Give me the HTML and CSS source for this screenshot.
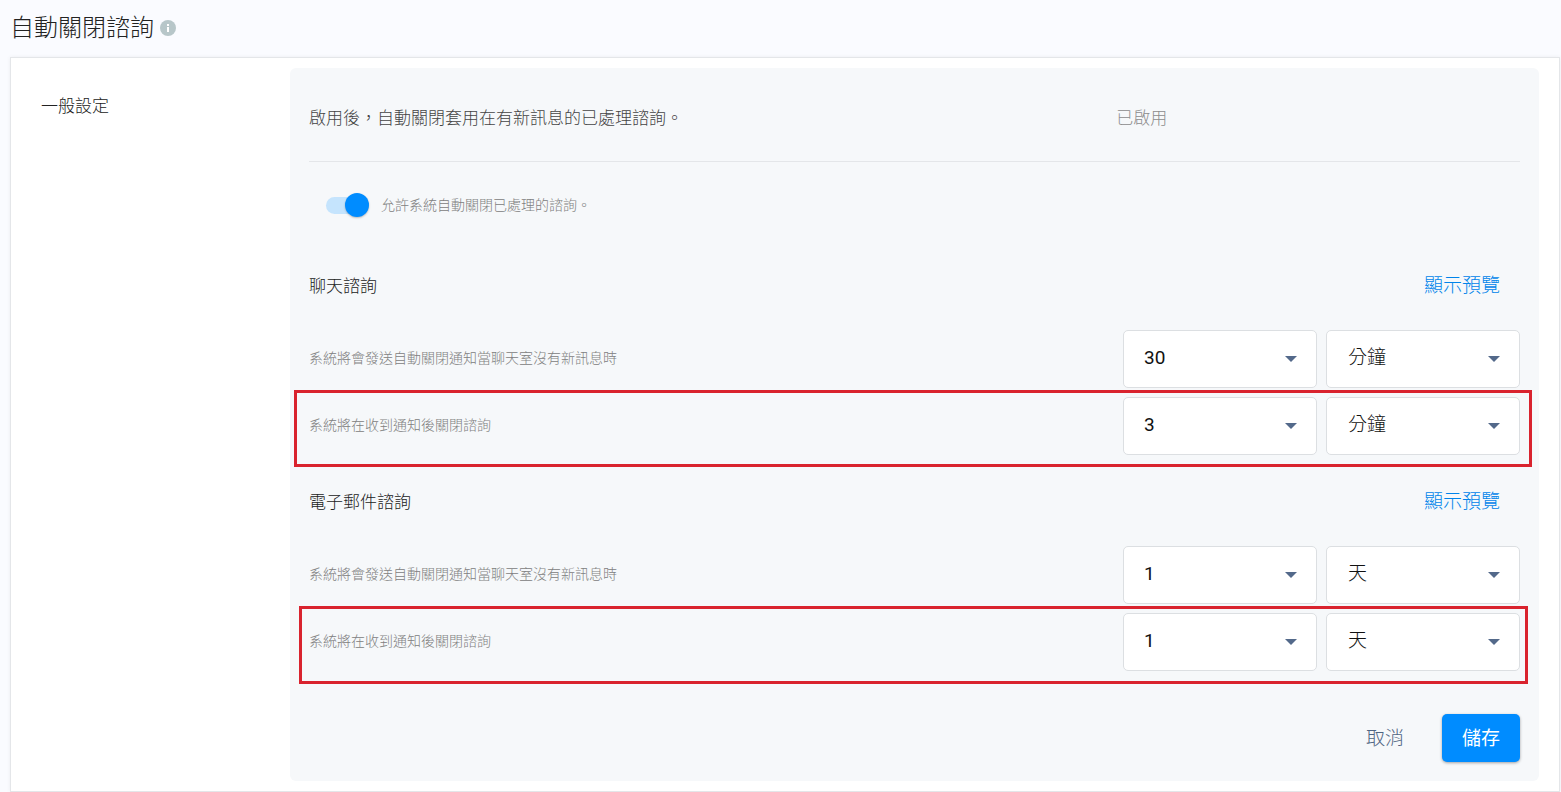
FILE: index.html
```html
<!DOCTYPE html>
<html lang="zh-Hant">
  <head>
    <meta charset="UTF-8" />
    <meta name="viewport" content="width=device-width, initial-scale=1.0" />
    <title>自動關閉諮詢</title>
    <link rel="stylesheet" href="styles.css">
  </head>
  <body>
    <header class="page-header">
      <h1>自動關閉諮詢</h1>
      <svg class="info-icon" viewBox="0 0 16 16" aria-hidden="true">
        <circle cx="8" cy="8" r="8" fill="#b7c6c9" />
        <rect x="7" y="4" width="2" height="2" fill="#fff" />
        <rect x="7" y="7" width="2" height="5" fill="#fff" />
      </svg>
    </header>
    <main class="card">
      <aside class="sidebar">
        <h2>一般設定</h2>
      </aside>
      <form class="panel">
        <div class="status-row">
          <p>啟用後，自動關閉套用在有新訊息的已處理諮詢。</p>
          <p class="status">已啟用</p>
        </div>
        <div class="toggle-row">
          <input type="checkbox" id="autoClose" class="switch" checked />
          <label for="autoClose">允許系統自動關閉已處理的諮詢。</label>
        </div>

        <section class="group">
          <div class="group-header">
            <h3>聊天諮詢</h3>
            <a href="#">顯示預覽</a>
          </div>
          <div class="row">
            <label for="chatNotify">系統將會發送自動關閉通知當聊天室沒有新訊息時</label>
            <div class="select">
              <select id="chatNotify" class="number">
                <option>3</option>
                <option selected>30</option>
              </select>
            </div>
            <div class="select">
              <select aria-label="單位">
                <option selected>分鐘</option>
                <option>天</option>
              </select>
            </div>
          </div>
          <div class="row marked">
            <label for="chatClose">系統將在收到通知後關閉諮詢</label>
            <div class="select">
              <select id="chatClose" class="number">
                <option selected>3</option>
                <option>30</option>
              </select>
            </div>
            <div class="select">
              <select aria-label="單位">
                <option selected>分鐘</option>
                <option>天</option>
              </select>
            </div>
          </div>
        </section>

        <section class="group">
          <div class="group-header">
            <h3>電子郵件諮詢</h3>
            <a href="#">顯示預覽</a>
          </div>
          <div class="row">
            <label for="mailNotify">系統將會發送自動關閉通知當聊天室沒有新訊息時</label>
            <div class="select">
              <select id="mailNotify" class="number">
                <option selected>1</option>
                <option>3</option>
              </select>
            </div>
            <div class="select">
              <select aria-label="單位">
                <option>分鐘</option>
                <option selected>天</option>
              </select>
            </div>
          </div>
          <div class="row marked marked-narrow">
            <label for="mailClose">系統將在收到通知後關閉諮詢</label>
            <div class="select">
              <select id="mailClose" class="number">
                <option selected>1</option>
                <option>3</option>
              </select>
            </div>
            <div class="select">
              <select aria-label="單位">
                <option>分鐘</option>
                <option selected>天</option>
              </select>
            </div>
          </div>
        </section>

        <div class="actions">
          <button type="button" class="btn-cancel">取消</button>
          <button type="submit" class="btn-save">儲存</button>
        </div>
      </form>
    </main>
  </body>
</html>
```

FILE: styles.css
```css
* {
  box-sizing: border-box;
  margin: 0;
  padding: 0;
}

body {
  font-family: Roboto, 'Noto Sans CJK TC', sans-serif;
  font-size: 17px;
  font-weight: 300;
  line-height: 24px;
  color: #222;
  background-color: #fafbff;
}

h1,
h2,
h3 {
  font-size: 17px;
  font-weight: 300;
}

.page-header {
  display: flex;
  align-items: center;
  gap: 6px;
  height: 57px;
  padding: 0 10px 2px;
}

.page-header h1 {
  font-size: 24px;
}

.info-icon {
  width: 16px;
  height: 16px;
}

.card {
  display: flex;
  margin: 0 1px 0 10px;
  background-color: #fff;
  border: 1px solid #e4e6e9;
  box-shadow: 0 0 4px rgba(0, 0, 0, 0.06);
}

.sidebar {
  flex: 0 0 279px;
  padding: 36px 30px;
}

.panel {
  flex: 1;
  margin: 10px 20px 10px 0;
  padding: 0 19px 19px;
  background-color: #f6f8fa;
  border-radius: 6px;
}

.status-row {
  display: grid;
  grid-template-columns: 2fr 1fr;
  padding: 38px 0 31px;
  color: #444;
  border-bottom: 1px solid #e4e6e9;
}

.status {
  color: #8c8c8c;
}

.toggle-row {
  display: flex;
  align-items: center;
  gap: 12px;
  height: 86px;
  padding-left: 17px;
  font-size: 14px;
  color: #808080;
}

.switch {
  appearance: none;
  display: flex;
  align-items: center;
  width: 43px;
  height: 17px;
  border-radius: 9px;
  background-color: #c5e4fd;
  cursor: pointer;
}

.switch::before {
  content: '';
  width: 24px;
  height: 24px;
  border-radius: 50%;
  background-color: #008cff;
  box-shadow: 0 1px 2px rgba(0, 0, 0, 0.25);
}

.switch:checked::before {
  margin-left: auto;
}

.group {
  margin-bottom: 9px;
}

.group-header {
  display: flex;
  justify-content: space-between;
  align-items: center;
  height: 82px;
  padding: 0 20px 6px 0;
}

.group-header a {
  font-size: 19px;
  color: #0084ea;
  text-decoration: none;
}

.row {
  position: relative;
  display: flex;
  align-items: center;
  gap: 9px;
}

.row + .row {
  margin-top: 9px;
}

.row label {
  flex: 1;
  padding-bottom: 2px;
  font-size: 14px;
  color: #808080;
}

/* red frame drawn around a row */
.marked::after {
  content: '';
  position: absolute;
  inset: -7px -12px -12px -15px;
  border: 3px solid #d9232e;
  pointer-events: none;
}

.marked-narrow::after {
  inset: -7px -8px -13px -10px;
}

.select {
  position: relative;
  flex: 0 0 194px;
}

.select select {
  appearance: none;
  display: block;
  width: 100%;
  height: 58px;
  padding: 0 40px 3px 21px;
  font-family: inherit;
  font-size: 19px;
  font-weight: 300;
  color: #111;
  background-color: #fff;
  border: 1px solid #dcdfe2;
  border-radius: 5px;
}

.select .number {
  padding-left: 20px;
  font-weight: 400;
}

.select::after {
  content: '';
  position: absolute;
  top: 26px;
  right: 20px;
  border: 6px solid transparent;
  border-top-color: #53698a;
  border-bottom: 0;
  pointer-events: none;
}

.actions {
  display: flex;
  justify-content: flex-end;
  gap: 18px;
  margin-top: 43px;
}

.actions button {
  height: 48px;
  padding: 0 20px 4px;
  font-family: inherit;
  font-size: 19px;
  font-weight: 300;
  border: none;
  border-radius: 5px;
  cursor: pointer;
}

.btn-cancel {
  color: #4f6482;
  background: none;
}

.actions .btn-save {
  font-weight: 400;
  color: #fff;
  background-color: #008cff;
  box-shadow: 0 1px 3px rgba(0, 0, 0, 0.35);
}

.btn-save:hover {
  background-color: #007de6;
}
```
